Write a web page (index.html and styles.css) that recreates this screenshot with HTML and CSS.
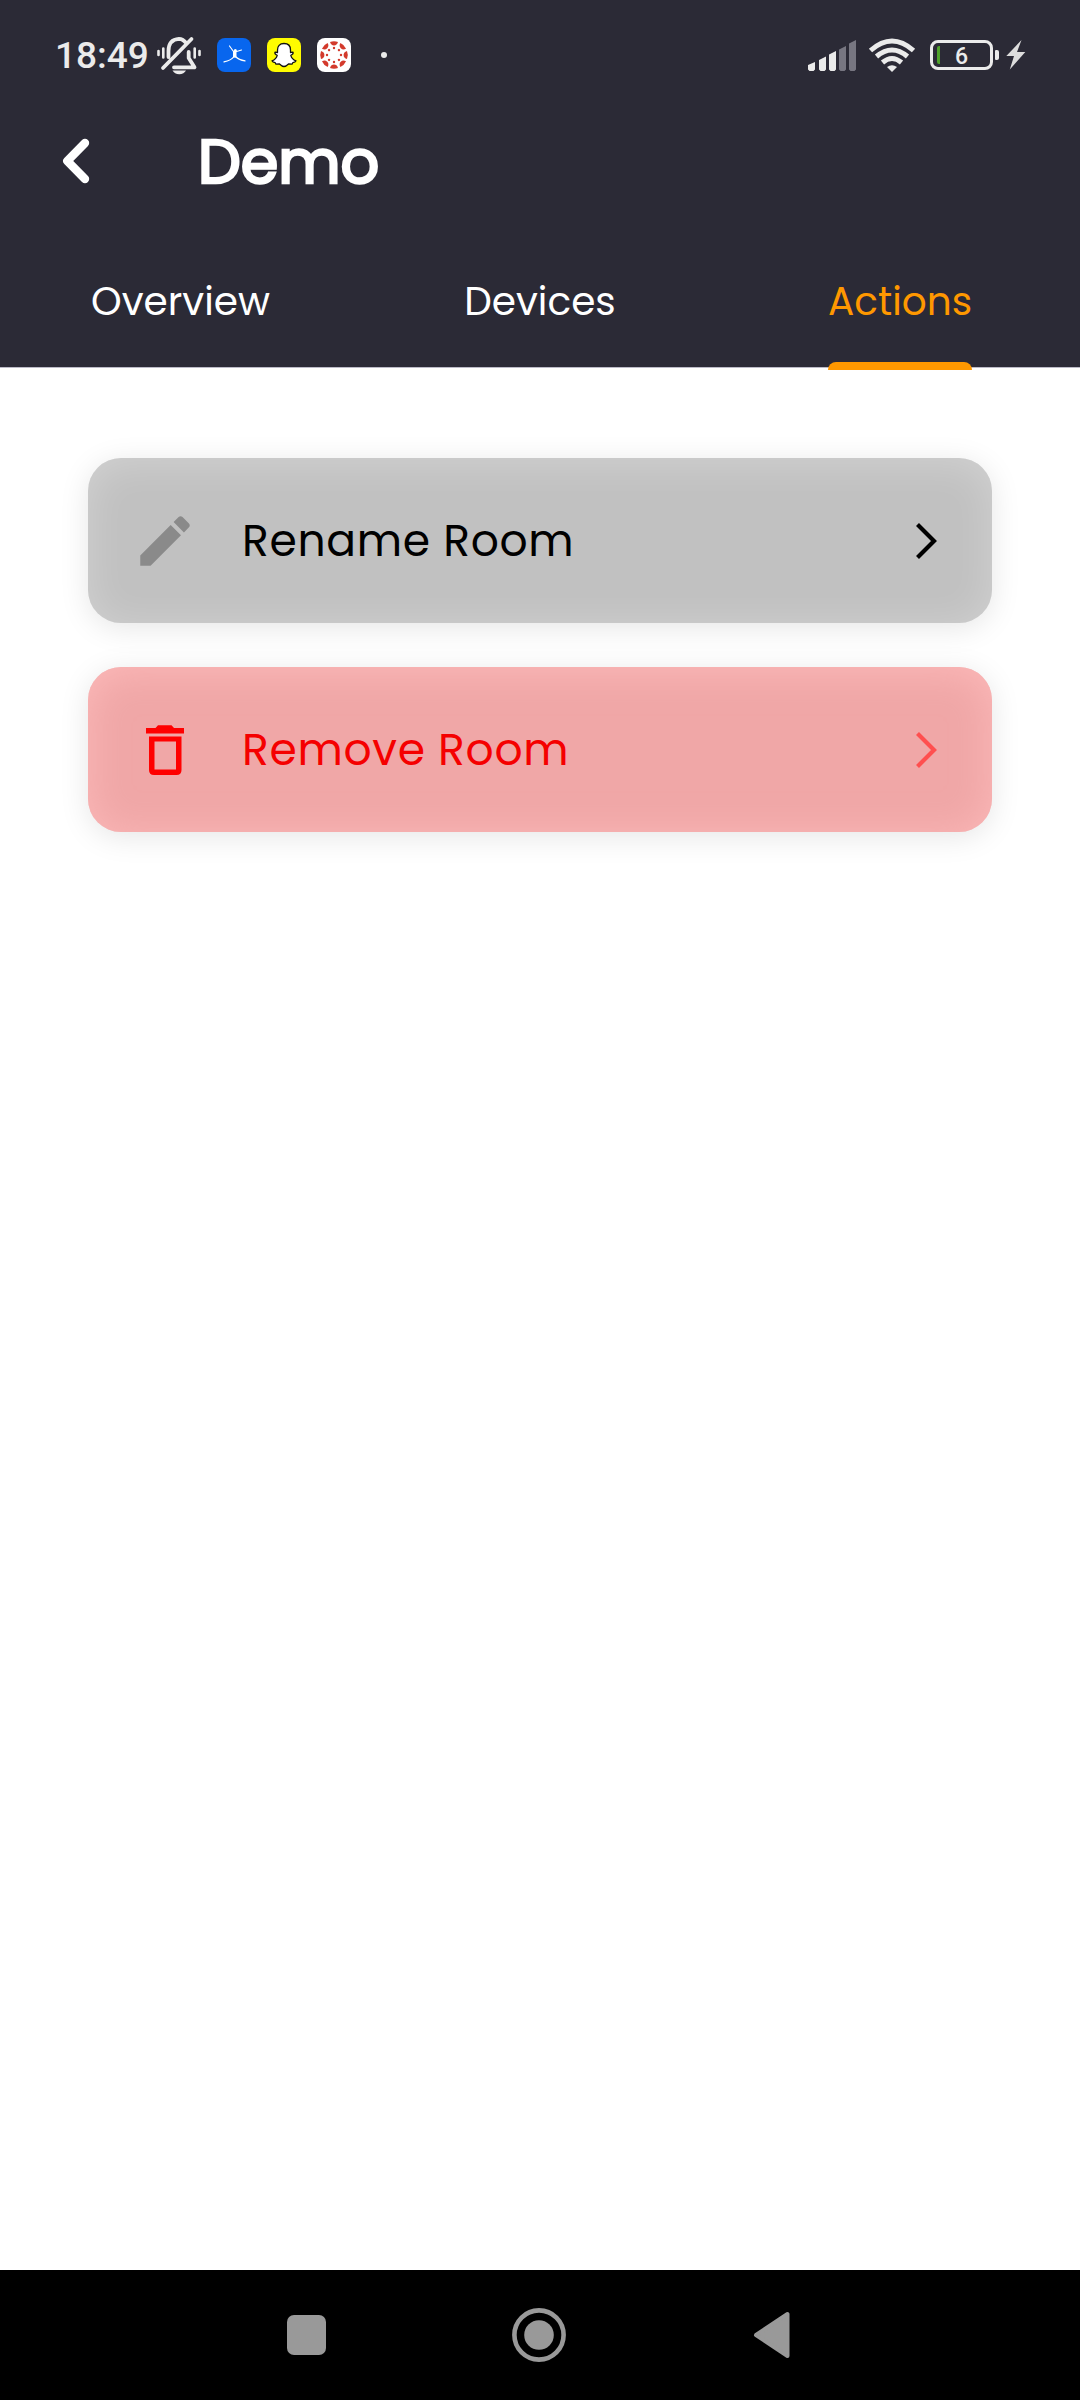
FILE: index.html
```html
<!DOCTYPE html>
<html lang="en">
<head>
<meta charset="utf-8">
<title>Demo</title>
<link rel="stylesheet" href="styles.css">
</head>
<body>
<div class="screen">
  <header class="header">
    <div class="status">
      <span class="time">18:49</span>
      <svg class="bell" width="46" height="40" viewBox="156 36 46 40" fill="none" stroke="#ebebeb" stroke-width="3.8" stroke-linecap="round" stroke-linejoin="round">
        <path d="M186.500 43.500Q183 38.800 179 38.800Q168.500 39.500 168.500 51V57M188.700 52V58L194.500 67.300H174M163 68L191.500 39"/>
        <path d="M172.500 70.500H186Q184 74.200 179.300 74.200Q174.500 74.200 172.500 70.500Z" fill="#ebebeb" stroke="none"/>
        <path d="M158.500 51V55M163.300 48.500V57.500M194.700 48.500V57.500M199.500 51V55" stroke-width="2.600"/>
      </svg>
      <div class="apps">
        <svg width="34" height="34" viewBox="0 0 34 34"><rect width="34" height="34" rx="8" fill="#0866ee"/><circle cx="18.300" cy="12.600" r="1.500" fill="#fff"/><path d="M12.500 8L16.500 13.500M24.500 12L18 14M17.500 14.500L18 19M17 18.500Q14 22.500 7 23.800M18.500 18.500Q22 22 28 22.800" fill="none" stroke="#fff" stroke-width="1.200" stroke-linecap="round"/><path d="M16 13H19.500L19.500 19.500H16Z" fill="#fff"/></svg>
        <svg width="34" height="34" viewBox="0 0 34 34"><rect width="34" height="34" rx="8" fill="#fffc00"/><path d="M17 5.500C21.500 5.500 23.500 8.500 23.500 12V14.500L26 14.200C26.500 15.500 25.500 16.500 23.800 17.300C24.500 20 26.500 21.800 29 22.800C28.500 24 27 24.500 25.800 24.700L25 26.200L21.500 26C20 27.500 18.500 28.500 17 28.500S14 27.500 12.500 26L9 26.200L8.200 24.700C7 24.500 5.500 24 5 22.800C7.500 21.800 9.500 20 10.200 17.300C8.500 16.500 7.500 15.500 8 14.200L10.500 14.500V12C10.500 8.500 12.500 5.500 17 5.500Z" fill="#fff" stroke="#111" stroke-width="1.300" stroke-linejoin="round"/></svg>
        <svg width="34" height="34" viewBox="0 0 34 34"><rect width="34" height="34" rx="8" fill="#fff"/>
          <g fill="#d33a2c">
            <g id="seg"><path d="M13 4Q17 2.400 21 4Q20 7.400 17 7.400T13 4Z"/><circle cx="17" cy="10" r="1.200"/></g>
            <use href="#seg" transform="rotate(45 17 17)"/><use href="#seg" transform="rotate(90 17 17)"/><use href="#seg" transform="rotate(135 17 17)"/><use href="#seg" transform="rotate(180 17 17)"/><use href="#seg" transform="rotate(225 17 17)"/><use href="#seg" transform="rotate(270 17 17)"/><use href="#seg" transform="rotate(315 17 17)"/>
          </g></svg>
      </div>
      <span class="dot"></span>
      <svg class="signal" width="48" height="32" viewBox="808 40 48 32" fill="#ebebeb">
        <path d="M808 65L815 62V69.500L813.500 71H809.500L808 69.500ZM819 60L826 56.500V69.500L824.500 71H820.500L819 69.500ZM829 54.500L836 51V69.500L834.500 71H830.500L829 69.500Z"/>
        <path d="M839 49.500L846 46V69.500L844.500 71H840.500L839 69.500ZM849 43.500L856 40V69.500L854.500 71H850.500L849 69.500Z" fill="#777681"/>
      </svg>
      <svg class="wifi" width="48" height="36" viewBox="868 37 48 36" fill="none" stroke="#ebebeb" stroke-width="5">
        <path d="M870.500 50.500Q892 31.500 913.500 50.500M876.500 56.500Q892 43.500 907.500 56.500M882.500 62.500Q892 54.500 901.500 62.500"/>
        <path d="M887 67Q892 63.500 897 67L892 72Z" fill="#ebebeb" stroke="none"/>
      </svg>
      <div class="battery"><span class="level"></span>6</div>
      <span class="nub"></span>
      <svg class="bolt" width="20" height="30" viewBox="0 0 20 30"><path d="M15.500 0L.3 16H8L3.800 29.500L19.300 12H11Z" fill="#dcdcdc"/></svg>
    </div>
    <div class="title-row">
      <svg width="30" height="48" viewBox="0 0 30 48" fill="none" stroke="#fff" stroke-width="8.400" stroke-linecap="round" stroke-linejoin="round"><path d="M25 6L7.300 24L25 42"/></svg>
      <h1 class="title">Demo</h1>
    </div>
    <nav class="tabs">
      <span class="tab overview">Overview</span>
      <span class="tab devices">Devices</span>
      <span class="tab actions">Actions</span>
    </nav>
  </header>
  <main class="content">
    <div class="card rename">
      <svg class="icon" width="66" height="66" viewBox="0 0 24 24"><path fill="#8a8a8a" d="M3 17.250V21h3.750L17.810 9.940l-3.750-3.750L3 17.250zM20.710 7.040c.39-.39.39-1.020 0-1.410l-2.340-2.340c-.39-.39-1.020-.39-1.410 0l-1.830 1.830 3.750 3.750 1.830-1.830z"/></svg>
      <span class="label">Rename Room</span>
      <svg class="chevron" width="24" height="40" viewBox="0 0 24 40" fill="none" stroke="#000" stroke-width="4.200"><path d="M3.500 3.500L20 20L3.500 36.500"/></svg>
    </div>
    <div class="card remove">
      <svg class="icon" width="66" height="66" viewBox="132 717 66 66"><path fill="#f00" d="M146 728H155.500L158 725.200H171.500L174 728H184V733.500H146ZM149 736.500H181.500V770Q181.500 775 176.500 775H154Q149 775 149 770ZM154.500 741.500V769.500H176V741.500Z" fill-rule="evenodd"/></svg>
      <span class="label">Remove Room</span>
      <svg class="chevron" width="24" height="40" viewBox="0 0 24 40" fill="none" stroke="#ff4f4f" stroke-width="4.200"><path d="M3.500 3.500L20 20L3.500 36.500"/></svg>
    </div>
  </main>
  <footer class="navbar">
    <span class="recent"></span>
    <svg class="home" width="54" height="54" viewBox="0 0 54 54"><circle cx="27" cy="27" r="24.600" fill="none" stroke="#999" stroke-width="4.600"/><circle cx="27" cy="27" r="14.800" fill="#999"/></svg>
    <svg width="38" height="48" viewBox="0 0 38 48"><path d="M3 24L34.500 3V45Z" fill="#999" stroke="#999" stroke-width="4" stroke-linejoin="round"/></svg>
  </footer>
</div>
</body>
</html>
```
FILE: styles.css
```css
* { box-sizing: border-box; }
body { margin: 0; background: #fff; font-family: Poppins, Inter, sans-serif; }
svg { display: block; flex: none; }
.screen { width: 1080px; height: 2400px; display: flex; flex-direction: column; }

.header { height: 368px; background: #2b2a36; border-bottom: 1px solid #bcbac8; display: flex; flex-direction: column; }
.status { height: 110px; display: flex; align-items: center; padding: 0 54px 0 55px; color: #ebebeb; font-family: Roboto, sans-serif; }
.time { width: 101px; font-size: 37px; font-weight: 500; line-height: 44px; padding-top: 2px; }
.bell { margin-top: 2px; }
.apps { display: flex; gap: 16px; margin-left: 15px; }
.dot { width: 6px; height: 6px; border-radius: 50%; background: #ebebeb; margin-left: 30px; }
.signal { margin-left: auto; margin-top: 2px; }
.wifi { margin-left: 12px; }
.battery { width: 63px; height: 30px; margin-left: 14px; border: 3px solid #ebebeb; border-radius: 8px; font-size: 23px; font-weight: 500; line-height: 28px; text-align: center; position: relative; }
.level { position: absolute; left: 4px; top: 3px; width: 3px; height: 18px; background: #4fa32a; border-radius: 2px 0 0 2px; }
.nub { width: 4px; height: 10px; margin-left: 2px; border-radius: 1px 2px 2px 1px; background: #ebebeb; }
.bolt { margin-left: 7px; }

.title-row { height: 102px; display: flex; align-items: center; padding-left: 60px; }
.title { margin: 0 0 0 108px; padding-top: 2px; color: #fff; font-size: 60.5px; font-weight: 400; line-height: 76px; -webkit-text-stroke: 2.6px #fff; }

.tabs { flex: 1; display: flex; justify-content: space-between; padding: 0 108px 0 91px; }
.tab { color: #fff; font-size: 39px; line-height: 46px; padding-top: 67px; white-space: nowrap; }
.devices { margin-right: 18px; }
.actions { color: #ff9800; width: 144px; position: relative; }
.actions::after { content: ""; position: absolute; left: 0; top: 150px; width: 144px; height: 8px; border-radius: 8px 8px 0 0; background: #ff9800; }

.content { flex: 1; padding: 90px 88px 0; display: flex; flex-direction: column; gap: 44px; }
.card { height: 165px; border-radius: 33px; display: flex; align-items: center; padding: 0 54px 0 44px; }
.rename { background: #c1c1c1; color: #000; box-shadow: 0 5px 30px rgba(0,0,0,.1), inset 0 4px 40px rgba(255,255,255,.28); }
.remove { background: #f0a7a7; color: #f50000; box-shadow: 0 5px 30px rgba(0,0,0,.1), inset 0 4px 40px rgba(255,190,190,.8); }
.label { margin-left: 44px; font-size: 44px; letter-spacing: .7px; line-height: 52px; white-space: nowrap; }
.chevron { margin-left: auto; }

.navbar { height: 130px; background: #000; display: flex; align-items: center; padding-left: 287px; }
.recent { width: 39px; height: 40px; border-radius: 7px; background: #999; }
.home { margin: 0 187px 0 186px; }
```
